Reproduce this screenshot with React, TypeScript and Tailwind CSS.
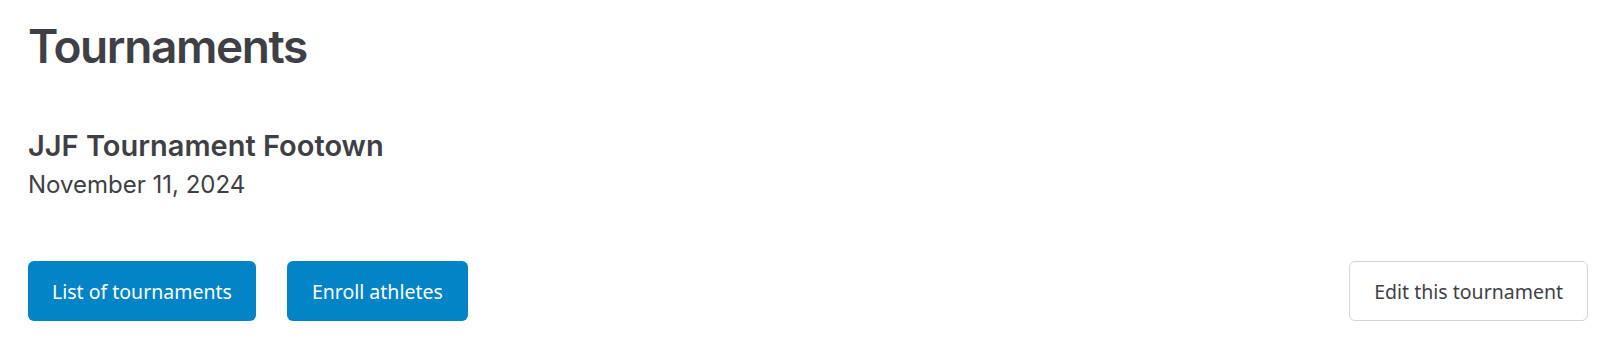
export default function App() {
  return (
    <div className="min-h-screen bg-white pl-7 pr-[25px] pt-[19px] text-[#3f3f46]" style={{ fontFamily: "Inter, 'Noto Sans', sans-serif" }}>
      <h1 className="text-[46px] font-semibold leading-[1.2] tracking-[-0.03em]">Tournaments</h1>
      <div className="mt-[53px]">
        <h2 className="text-[29px] font-semibold leading-[1.3]">JJF Tournament Footown</h2>
        <p className="mt-[3px] text-[24px] leading-[1.4]">November 11, 2024</p>
      </div>
      <div className="mt-[60px] flex items-center justify-between" style={{ fontFamily: "'Noto Sans', sans-serif" }}>
        <div className="flex gap-[31px]">
          <button className="h-[60px] rounded-md bg-[#0284c7] px-[24px] text-[19.5px] text-white">List of tournaments</button>
          <button className="h-[60px] rounded-md bg-[#0284c7] px-[25px] text-[19.5px] text-white">Enroll athletes</button>
        </div>
        <button className="h-[60px] rounded-md border border-[#d4d4d8] bg-white px-[24px] text-[19.5px] text-[#3f3f46]">Edit this tournament</button>
      </div>
    </div>
  );
}
